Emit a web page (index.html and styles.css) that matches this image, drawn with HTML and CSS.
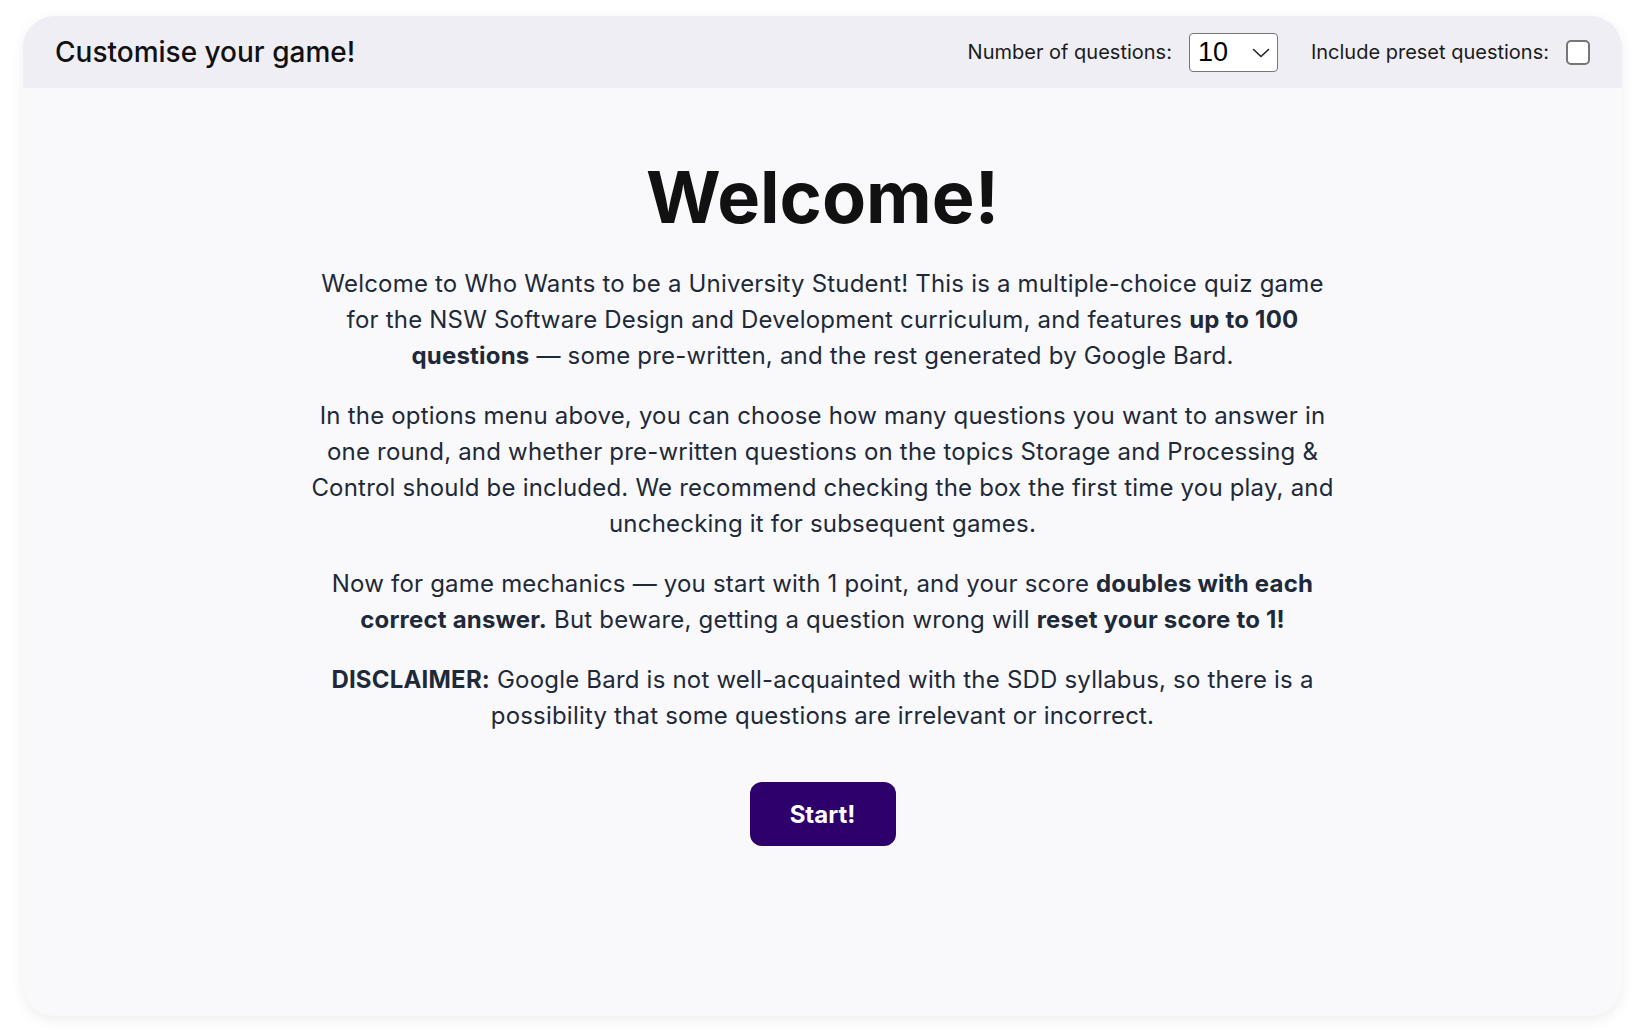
FILE: index.html
```html
<!DOCTYPE html>
<html lang="en">
<head>
<meta charset="utf-8">
<title>Who Wants to be a University Student</title>
<link rel="stylesheet" href="styles.css">
</head>
<body>
<div class="card">
  <header class="header">
    <div class="title">Customise your game!</div>
    <div class="options">
      <label class="opt" for="num">Number of questions:</label>
      <div class="select-wrap">
        <select id="num" class="select">
          <option>5</option>
          <option selected>10</option>
          <option>20</option>
          <option>50</option>
          <option>100</option>
        </select>
        <svg class="chev" width="18" height="10" viewBox="0 0 18 10"><path d="M1.5 1.5 L9 8.5 L16.5 1.5" fill="none" stroke="#222" stroke-width="1.6" stroke-linecap="round" stroke-linejoin="round"/></svg>
      </div>
      <label class="opt opt-gap" for="preset">Include preset questions:</label>
      <input id="preset" class="check" type="checkbox">
    </div>
  </header>
  <main class="main">
    <h1 class="heading">Welcome!</h1>
    <p>Welcome to Who Wants to be a University Student! This is a multiple-choice quiz game for the NSW Software Design and Development curriculum, and features <b>up to 100 questions</b> — some pre-written, and the rest generated by Google Bard.</p>
    <p>In the options menu above, you can choose how many questions you want to answer in one round, and whether pre-written questions on the topics Storage and Processing &amp; Control should be included. We recommend checking the box the first time you play, and unchecking it for subsequent games.</p>
    <p>Now for game mechanics — you start with 1 point, and your score <b>doubles with each correct answer.</b> But beware, getting a question wrong will <b>reset your score to 1!</b></p>
    <p><b>DISCLAIMER:</b> Google Bard is not well-acquainted with the SDD syllabus, so there is a possibility that some questions are irrelevant or incorrect.</p>
    <button class="start" type="button">Start!</button>
  </main>
</div>
</body>
</html>
```

FILE: styles.css
```css
* { box-sizing: border-box; }
html, body { margin: 0; }
body {
  padding: 16px 13px 19px 23px;
  background: #ffffff;
  font-family: Inter, "Noto Sans", sans-serif;
}
.card {
  width: 1599px;
  height: 1000px;
  border-radius: 32px;
  background: #f9f9fb;
  box-shadow: 0 4px 14px rgba(0, 0, 0, 0.07);
  overflow: hidden;
  display: flex;
  flex-direction: column;
}
.header {
  height: 72px;
  flex: none;
  background: #f0eef5;
  display: flex;
  align-items: center;
  justify-content: space-between;
  padding: 0 32px 0 32px;
}
.title {
  font-size: 28px;
  font-weight: 500;
  color: #111111;
}
.options {
  display: flex;
  align-items: center;
}
.opt {
  font-size: 20px;
  color: #1a1a1a;
}
.opt-gap { margin-left: 33px; }
.select-wrap {
  position: relative;
  margin-left: 17px;
}
.select {
  appearance: none;
  -webkit-appearance: none;
  width: 89px;
  height: 39px;
  border: 1.5px solid #767676;
  border-radius: 4px;
  background: #ffffff;
  font-family: "Liberation Sans", Arial, sans-serif;
  font-size: 27px;
  color: #000;
  padding: 0 0 0 8px;
  display: block;
}
.chev {
  position: absolute;
  right: 8px;
  top: 15px;
  pointer-events: none;
}
.check {
  appearance: none;
  -webkit-appearance: none;
  margin: 0 0 0 17px;
  width: 24px;
  height: 25px;
  border: 2px solid #767676;
  border-radius: 5px;
  background: #ffffff;
}
.main {
  flex: 1;
  display: flex;
  flex-direction: column;
  align-items: center;
  text-align: center;
  color: #1e2939;
}
.heading {
  margin: 65px 0 26px;
  font-size: 72px;
  font-weight: 700;
  color: #111111;
  line-height: normal;
  letter-spacing: 0;
}
.main p {
  max-width: 1030px;
  margin: 0 0 24px;
  font-size: 24px;
  line-height: 36px;
  letter-spacing: 0.0083em;
}
.main b { font-weight: 700; }
.start {
  margin-top: 24px;
  width: 146px;
  height: 64px;
  border: none;
  border-radius: 12px;
  background: #2d006b;
  color: #ffffff;
  font-family: Inter, sans-serif;
  font-size: 24px;
  font-weight: 700;
}
```
